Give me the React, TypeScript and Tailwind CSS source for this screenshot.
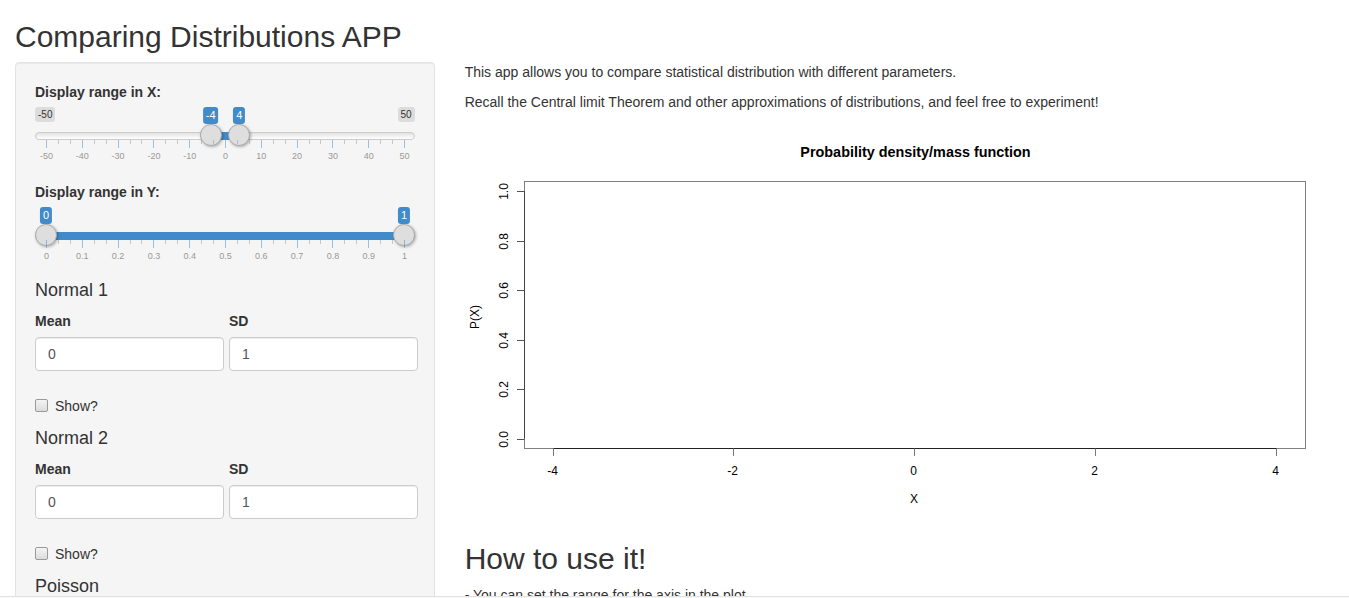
import React from 'react';

const GRID_W = 358;
const pos = (p: number) => 11 + p * GRID_W;

type SliderProps = {
  labels: string[];
  from: number;
  to: number;
  fromText: string;
  toText: string;
  minText?: string;
  maxText?: string;
};

function RangeSlider({ labels, from, to, fromText, toText, minText, maxText }: SliderProps) {
  const n = labels.length - 1;
  const pols: { x: number; big: boolean }[] = [];
  for (let i = 0; i <= n; i++) {
    pols.push({ x: pos(i / n), big: true });
    if (i < n) {
      pols.push({ x: pos((i + 1 / 3) / n), big: false });
      pols.push({ x: pos((i + 2 / 3) / n), big: false });
    }
  }

  return (
    <div className="relative h-[60px] w-full">
      {minText && (
        <span className="absolute left-0 top-0 rounded-[3px] bg-black/10 px-[3px] py-px text-[10px] leading-[1.333] text-[#333]">
          {minText}
        </span>
      )}
      {maxText && (
        <span className="absolute right-0 top-0 rounded-[3px] bg-black/10 px-[3px] py-px text-[10px] leading-[1.333] text-[#333]">
          {maxText}
        </span>
      )}
      <span className="absolute left-0 right-0 top-[25px] h-2 rounded-2xl border border-[#cccccc] bg-linear-to-b from-[#e2e2e2] to-white" />
      <span
        className="absolute top-[25px] h-2 bg-[#428bca]"
        style={{ left: pos(from), width: pos(to) - pos(from) }}
      />
      {[from, to].map((p, i) => (
        <span
          key={i}
          className="absolute top-[17px] h-[22px] w-[22px] rounded-full border border-[#ababab] bg-[#dedede] shadow-[1px_1px_3px_rgba(0,0,0,0.3)]"
          style={{ left: pos(p) - 11 }}
        />
      ))}
      {[
        { p: from, t: fromText },
        { p: to, t: toText },
      ].map((l, i) => (
        <span
          key={i}
          className="absolute top-0 -translate-x-1/2 rounded-[3px] bg-[#428bca] px-[3px] py-px text-[11px] leading-[1.333] text-white"
          style={{ left: pos(l.p) }}
        >
          {l.t}
        </span>
      ))}
      {pols.map((g, i) => (
        <span
          key={i}
          className={
            g.big
              ? 'absolute top-[33px] h-2 w-px bg-[#428bca] opacity-50'
              : 'absolute top-[33px] h-1 w-px bg-[#999] opacity-50'
          }
          style={{ left: g.x }}
        />
      ))}
      {labels.map((t, i) => (
        <span
          key={t}
          className="absolute top-[44px] -translate-x-1/2 text-[9px] leading-[10px] text-[#999]"
          style={{ left: pos(i / n) + 0.5 }}
        >
          {t}
        </span>
      ))}
    </div>
  );
}

function NumberPair({ mean, sd }: { mean: string; sd: string }) {
  return (
    <div className="flex gap-[5px]">
      <div className="w-[189px] shrink-0">
        <label className="mb-[6px] block font-bold">Mean</label>
        <input
          defaultValue={mean}
          className="block h-[34px] w-full rounded border border-[#cccccc] bg-white px-3 py-[6px] text-sm text-[#555] shadow-[inset_0_1px_1px_rgba(0,0,0,0.075)] outline-none"
        />
      </div>
      <div className="w-[189px] shrink-0">
        <label className="mb-[6px] block font-bold">SD</label>
        <input
          defaultValue={sd}
          className="block h-[34px] w-full rounded border border-[#cccccc] bg-white px-3 py-[6px] text-sm text-[#555] shadow-[inset_0_1px_1px_rgba(0,0,0,0.075)] outline-none"
        />
      </div>
    </div>
  );
}

function Section({ title, mean, sd }: { title: string; mean: string; sd: string }) {
  return (
    <div>
      <h4 className="mb-[10px] text-[18px] leading-[1.1]">{title}</h4>
      <NumberPair mean={mean} sd={sd} />
      <label className="mb-[13px] mt-[25px] flex h-5 items-center">
        <input
          type="checkbox"
          className="m-0 mr-[7px] h-[13px] w-[13px] appearance-none rounded-[2px] border border-[#9a9a9a] bg-linear-to-b from-[#f4f4f4] to-[#dcdcdc]"
        />
        <span>Show?</span>
      </label>
    </div>
  );
}

function Plot() {
  const xs = [-4, -2, 0, 2, 4];
  const ys = ['0.0', '0.2', '0.4', '0.6', '0.8', '1.0'];
  const x0 = 88.5;
  const dx = 180.8;
  const y0 = 316.5;
  const dy = 49.5;
  return (
    <svg width="869" height="400" className="block" fontFamily="'Liberation Sans', Arial, sans-serif">
      <text x="450.5" y="35" textAnchor="middle" fontSize="14.4" fontWeight="bold" fill="#000">
        Probability density/mass function
      </text>
      <rect x="59.5" y="59.5" width="781" height="267" fill="none" stroke="#808080" strokeWidth="1" />
      <line x1="59.5" y1={y0 - 5 * dy} x2="59.5" y2={y0} stroke="#444" />
      <line x1={x0} y1="326.5" x2={x0 + 4 * dx} y2="326.5" stroke="#222" />
      {ys.map((t, i) => {
        const y = Math.round(y0 - i * dy) + 0.5;
        return (
          <g key={t}>
            <line x1="52" y1={y} x2="59.5" y2={y} stroke="#555" />
            <text
              transform={`translate(42.5 ${y}) rotate(-90)`}
              textAnchor="middle"
              fontSize="12"
              fill="#000"
            >
              {t}
            </text>
          </g>
        );
      })}
      {xs.map((t, i) => {
        const x = Math.round(x0 + i * dx) - 0.5;
        return (
          <g key={t}>
            <line x1={x} y1="326.5" x2={x} y2="334" stroke="#777" />
            <text x={x - 1} y="352.5" textAnchor="middle" fontSize="12" fill="#000">
              {t}
            </text>
          </g>
        );
      })}
      <text x="449" y="380.5" textAnchor="middle" fontSize="12" fill="#000">
        X
      </text>
      <text transform="translate(14 195) rotate(-90)" textAnchor="middle" fontSize="12" fill="#000">
        P(X)
      </text>
    </svg>
  );
}

export default function App() {
  const xLabels = ['-50', '-40', '-30', '-20', '-10', '0', '10', '20', '30', '40', '50'];
  const yLabels = ['0', '0.1', '0.2', '0.3', '0.4', '0.5', '0.6', '0.7', '0.8', '0.9', '1'];

  return (
    <div className="h-screen overflow-hidden bg-white px-[15px] font-['Liberation_Sans',Arial,sans-serif] text-sm leading-5 text-[#333]">
      <h2 className="mb-[9px] mt-5 text-[30px] leading-[1.1]">Comparing Distributions APP</h2>
      <div className="-mx-[15px] flex">
        <div className="w-1/3 shrink-0 px-[15px]">
          <div className="mb-5 rounded border border-[#e3e3e3] bg-[#f5f5f5] p-[19px] shadow-[inset_0_1px_1px_rgba(0,0,0,0.05)]">
            <label className="mb-[5px] block font-bold">Display range in X:</label>
            <RangeSlider
              labels={xLabels}
              from={0.46}
              to={0.54}
              fromText="-4"
              toText="4"
              minText="-50"
              maxText="50"
            />
            <div className="mt-[15px]">
              <label className="mb-[5px] block font-bold">Display range in Y:</label>
              <RangeSlider labels={yLabels} from={0} to={1} fromText="0" toText="1" />
            </div>
            <div className="mt-[14px]">
              <Section title="Normal 1" mean="0" sd="1" />
              <Section title="Normal 2" mean="0" sd="1" />
              <h4 className="mb-[10px] text-[18px] leading-[1.1]">Poisson</h4>
              <label className="mb-[6px] block font-bold">Lambda</label>
              <input
                defaultValue="1"
                className="block h-[34px] w-full rounded border border-[#cccccc] bg-white px-3 py-[6px] text-sm text-[#555]"
              />
            </div>
          </div>
        </div>
        <div className="w-2/3 shrink-0 px-[15px]">
          <p className="mb-[10px]">This app allows you to compare statistical distribution with different parameters.</p>
          <p className="mb-[10px]">
            Recall the Central limit Theorem and other approximations of distributions, and feel free to experiment!
          </p>
          <Plot />
          <h2 className="mb-[10px] mt-5 text-[30px] leading-[1.1]">How to use it!</h2>
          <p className="mb-[10px]">- You can set the range for the axis in the plot</p>
          <p className="mb-[10px]">- Select the distributions you want to show and set their parameters</p>
        </div>
      </div>
      <div className="fixed inset-x-0 bottom-0 h-[2px] border-t border-[#e2e2e2] bg-[#f7f7f7]" />
    </div>
  );
}
